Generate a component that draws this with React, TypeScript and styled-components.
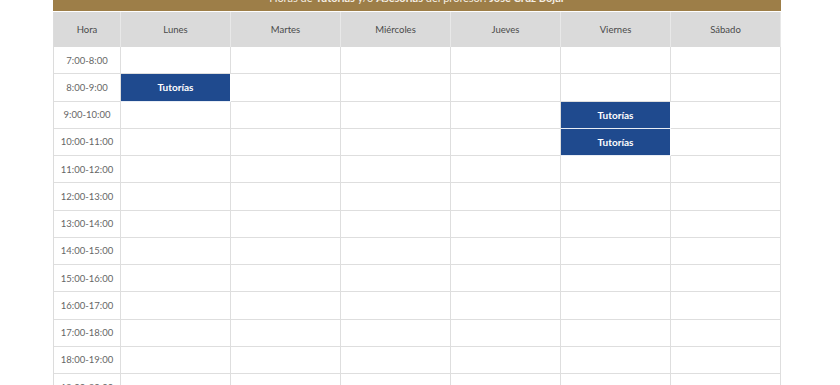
import { Fragment } from 'react';
import styled, { createGlobalStyle } from 'styled-components';

const GlobalStyle = createGlobalStyle`
  body {
    margin: 0;
    background: #ffffff;
    font-family: 'Lato', 'Noto Sans', sans-serif;
  }
`;

const Page = styled.div`
  padding: 0 59px 0 53px;
  height: 385px;
  overflow: hidden;
`;

const TitleBar = styled.div`
  height: 11px;
  overflow: hidden;
  background: #9d7e48;
  text-align: center;
`;

const TitleText = styled.div`
  margin-top: -9px;
  line-height: 14px;
  font-size: 11px;
  color: #f4eee4;
  b {
    font-weight: 700;
  }
`;

const Grid = styled.div`
  display: grid;
  grid-template-columns: 67px repeat(5, 110px) 1fr;
  grid-template-rows: 35px;
  grid-auto-rows: 27.25px;
  border-left: 1px solid #dcdcdc;
  margin-top: 1px;
`;

const HeadCell = styled.div`
  display: flex;
  align-items: center;
  justify-content: center;
  background: #dadada;
  border-right: 1px solid #e8e8e8;
  font-size: 9.5px;
  color: #4a4a4a;
`;

const Cell = styled.div<{ $busy?: boolean }>`
  display: flex;
  align-items: center;
  justify-content: center;
  box-sizing: border-box;
  border-right: 1px solid ${(p) => (p.$busy ? '#ffffff' : '#dedede')};
  border-bottom: 1px solid ${(p) => (p.$busy ? '#e8edf5' : '#dedede')};
  background: ${(p) => (p.$busy ? '#1f4a8e' : '#ffffff')};
  color: ${(p) => (p.$busy ? '#ffffff' : '#666')};
  font-size: ${(p) => (p.$busy ? '10px' : '9.5px')};
  font-weight: ${(p) => (p.$busy ? 700 : 400)};
`;

const days = ['Lunes', 'Martes', 'Miércoles', 'Jueves', 'Viernes', 'Sábado'];

const hours = Array.from({ length: 13 }, (_, i) => `${i + 7}:00-${i + 8}:00`);

// day -> hour rows busy with tutorías
const busy: Record<string, number[]> = {
  Lunes: [1],
  Viernes: [2, 3]
};

function App() {
  return (
    <>
      <GlobalStyle />
      <Page>
        <TitleBar>
          <TitleText>
            Horas de <b>Tutorías</b> y/o <b>Asesorías</b> del profesor: <b>José Cruz Bojar</b>
          </TitleText>
        </TitleBar>
        <Grid>
          <HeadCell>Hora</HeadCell>
          {days.map((d) => (
            <HeadCell key={d}>{d}</HeadCell>
          ))}
          {hours.map((h, row) => (
            <Fragment key={h}>
              <Cell>{h}</Cell>
              {days.map((d) => {
                const isBusy = busy[d]?.includes(row);
                return (
                  <Cell key={d} $busy={isBusy}>
                    {isBusy ? 'Tutorías' : ''}
                  </Cell>
                );
              })}
            </Fragment>
          ))}
        </Grid>
      </Page>
    </>
  );
}

export default App;
